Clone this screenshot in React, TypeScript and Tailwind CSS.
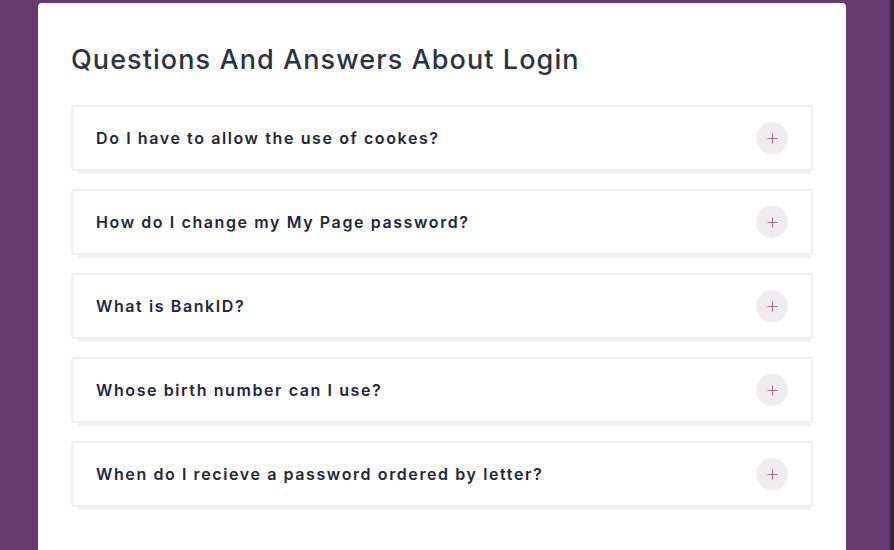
const questions = [
	"Do I have to allow the use of cookes?",
	"How do I change my My Page password?",
	"What is BankID?",
	"Whose birth number can I use?",
	"When do I recieve a password ordered by letter?",
];

const PlusButton = () => (
	<span className="flex h-8 w-8 items-center justify-center rounded-full bg-[#efebef]">
		<svg width="11" height="11" viewBox="0 0 11 11" fill="none">
			<path d="M5.5 0.5v10M0.5 5.5h10" stroke="#9a7088" strokeWidth="1.1" />
		</svg>
	</span>
);

export default function App() {
	return (
		<div className="flex h-[550px] w-[894px] overflow-hidden bg-[#643a70] font-['Inter',sans-serif]">
			<main className="ml-[38px] mt-[3px] w-[808px] flex-shrink-0 rounded-t-[4px] bg-white px-[33px] pt-[37px]">
				<h1 className="text-[27px] font-medium leading-[40px] tracking-[0.04em] text-[#2a3342]">
					Questions And Answers About Login
				</h1>
				<div className="mt-[25px] flex flex-col gap-[18px]">
					{questions.map((q) => (
						<div
							key={q}
							className="flex h-[66px] items-center justify-between rounded-[3px] border-2 border-[#efefef] bg-white pl-[23px] pr-[23px] shadow-[2px_8px_0_-5px_#f2f2f2]"
						>
							<h3 className="text-[16px] font-semibold tracking-[0.1em] text-[#1f2735]">
								{q}
							</h3>
							<PlusButton />
						</div>
					))}
				</div>
			</main>
			<div className="ml-auto h-full w-[4px] bg-[#2e2f3a]" />
		</div>
	);
}
